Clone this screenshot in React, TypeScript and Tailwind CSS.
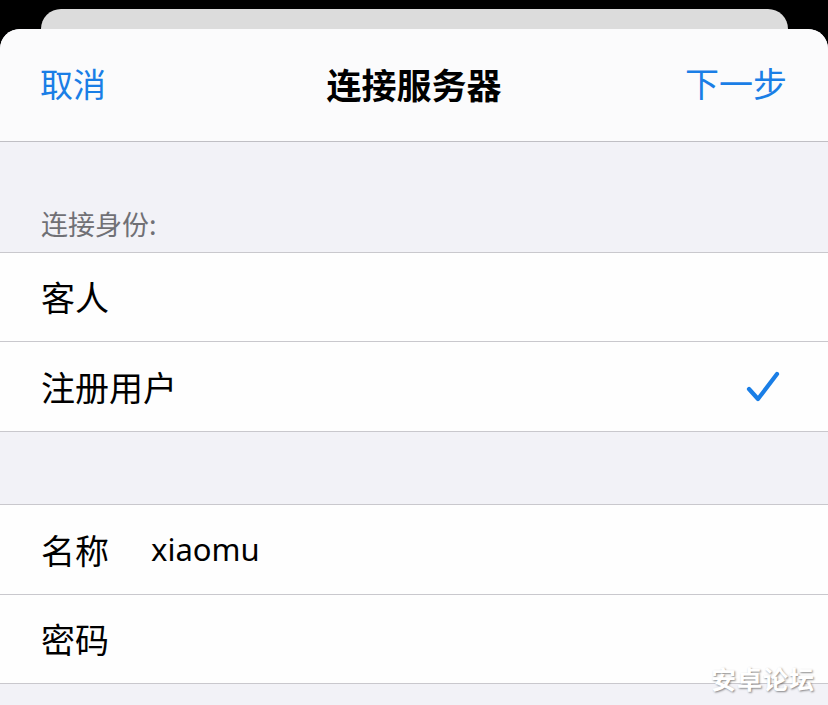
import React from "react";

const font = { fontFamily: '"Noto Sans CJK SC", "Noto Sans", sans-serif' };

function Row({ children, right, h }: { children: React.ReactNode; right?: React.ReactNode; h: string }) {
  return (
    <div className={`${h} bg-[#fefefe] border-b border-[#c9c8cd] flex items-center pl-[41px] pr-[48px] shrink-0`}>
      <div className="flex-1 flex items-center text-[34px] text-black leading-none">{children}</div>
      {right}
    </div>
  );
}

export default function App() {
  return (
    <div className="relative w-[828px] h-[705px] bg-black overflow-hidden flex flex-col" style={font}>
      {/* card stacked behind the sheet */}
      <div className="ml-[41px] mr-[40px] mt-[9px] h-[20px] bg-[#dcdcdc] rounded-t-[20px] shrink-0" />
      <div className="flex-1 bg-[#f2f2f7] rounded-t-[20px] overflow-hidden flex flex-col">
        {/* navigation bar */}
        <div className="h-[113px] bg-[#fbfbfc] border-b border-[#c0bfc4] flex items-center justify-between pl-[40px] pr-[41px] pb-[4px] shrink-0 relative">
          <span className="text-[33px] text-[#1a7ee6] leading-none">取消</span>
          <span className="absolute left-0 right-0 text-center text-[35px] font-semibold text-black leading-none">连接服务器</span>
          <span className="text-[34px] text-[#1a7ee6] leading-none">下一步</span>
        </div>

        {/* section header */}
        <div className="h-[111px] border-b border-[#c9c8cd] flex items-end pl-[41px] pb-[15px] shrink-0">
          <span className="text-[27px] text-[#707075] leading-none">连接身份:</span>
        </div>
        <Row h="h-[89px]">客人</Row>
        <Row
          h="h-[90px]"
          right={
            <svg width="34" height="32" viewBox="0 0 34 32" fill="none">
              <path d="M3 18 L12 28 L31 3" stroke="#1a7ee6" strokeWidth="4.2" strokeLinecap="round" strokeLinejoin="round" />
            </svg>
          }
        >
          注册用户
        </Row>

        <div className="h-[73px] border-b border-[#c9c8cd] shrink-0" />
        <Row h="h-[90px]">
          <span className="w-[110px]">名称</span>
          <span className="text-[31px]" style={{ fontFamily: '"Noto Sans", "Open Sans", sans-serif' }}>xiaomu</span>
        </Row>
        <Row h="h-[89px]">密码</Row>
      </div>

      {/* site watermark */}
      <div
        className="absolute right-[13px] bottom-[14px] text-[25px] font-bold text-white leading-none tracking-[1px]"
        style={{ textShadow: "1px 1px 2px rgba(0,0,0,0.45)" }}
      >
        安卓论坛
      </div>
    </div>
  );
}
